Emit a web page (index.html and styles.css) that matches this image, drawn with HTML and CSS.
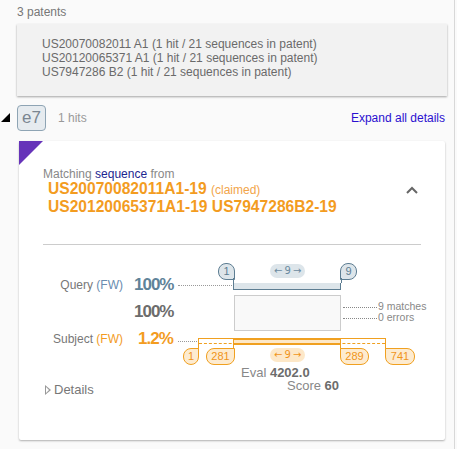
FILE: index.html
```html
<!DOCTYPE html>
<html lang="en">
<head>
    <meta charset="UTF-8">
    <meta name="viewport" content="width=device-width, initial-scale=1.0">
    <title>Patent hits</title>
    <link rel="stylesheet" href="styles.css">
</head>
<body>
    <div class="page">
        <div class="count">3 patents</div>

        <!-- Patent list -->
        <div class="patents">
            <div>US20070082011 A1 (1 hit / 21 sequences in patent)</div>
            <div>US20120065371 A1 (1 hit / 21 sequences in patent)</div>
            <div>US7947286 B2 (1 hit / 21 sequences in patent)</div>
        </div>

        <!-- Hit header -->
        <div class="hit-head">
            <span class="toggle"></span>
            <span class="badge">e7</span>
            <span class="hits">1 hits</span>
            <a class="expand" href="#">Expand all details</a>
        </div>

        <!-- Hit card -->
        <div class="card">
            <div class="corner"></div>
            <div class="card-top">
                <div>
                    <div class="from">Matching <span class="seq">sequence</span> from</div>
                    <div class="ids">US20070082011A1-19 <span class="claimed">(claimed)</span></div>
                    <div class="ids">US20120065371A1-19 US7947286B2-19</div>
                </div>
                <svg class="chevron" width="12" height="8" viewBox="0 0 12 8">
                    <path d="M1 7 L6 2 L11 7" fill="none" stroke="#666" stroke-width="2"/>
                </svg>
            </div>
            <div class="sep"></div>

            <!-- Alignment diagram -->
            <div class="align">
                <div class="row">
                    <div class="label">Query <span class="fw-q">(FW)</span></div>
                    <div class="pct pct-q">100%</div>
                    <div class="track">
                        <div class="dots"></div>
                        <div class="pin pin-q pin-left" style="left: 40px; width: 17px;">1</div>
                        <div class="pill pill-q">&larr; 9 &rarr;</div>
                        <div class="pin pin-q pin-right" style="left: 162px; width: 17px;">9</div>
                        <div class="bar bar-q"></div>
                    </div>
                </div>
                <div class="row">
                    <div class="label"></div>
                    <div class="pct pct-m">100%</div>
                    <div class="track">
                        <div class="mbox"></div>
                        <div class="stat">
                            <div><span class="sdots"></span>9 matches</div>
                            <div><span class="sdots"></span>0 errors</div>
                        </div>
                    </div>
                </div>
                <div class="row">
                    <div class="label">Subject <span class="fw-s">(FW)</span></div>
                    <div class="pct pct-s">1.2%</div>
                    <div class="track">
                        <div class="dots dots-s"></div>
                        <div class="ext"></div>
                        <div class="bar bar-s"></div>
                        <div class="pin pin-s pin-left" style="left: 5px; width: 16px;">1</div>
                        <div class="pin pin-s pin-left" style="left: 28px; width: 29px;">281</div>
                        <div class="pill pill-s">&larr; 9 &rarr;</div>
                        <div class="pin pin-s pin-right" style="left: 162px; width: 29px;">289</div>
                        <div class="pin pin-s pin-right" style="left: 207px; width: 30px;">741</div>
                    </div>
                </div>
                <div class="scores">
                    <div class="eval">Eval <b>4202.0</b></div>
                    <div class="score">Score <b>60</b></div>
                </div>
            </div>

            <div class="details"><span class="tri"></span>Details</div>
        </div>
    </div>
</body>
</html>
```

FILE: styles.css
```css
body {
    margin: 0;
    font-family: "Liberation Sans", Arial, sans-serif;
    background-color: #fafafa;
    color: #777;
}
.page {
    width: 455px;
    height: 449px;
    border-right: 1px solid #d8d8d8;
    box-sizing: border-box;
    padding: 5px 0 0 17px;
    background-color: #fafafa;
}
.count {
    font-size: 12px;
    line-height: 14px;
    color: #777;
}
.patents {
    margin-top: 5px;
    width: 430px;
    height: 72px;
    box-sizing: border-box;
    padding: 13px 0 0 25px;
    background-color: #f2f2f2;
    box-shadow: 0 1px 2px rgba(0, 0, 0, 0.35);
    font-size: 12px;
    line-height: 14px;
    color: #6a6a6a;
}
.hit-head {
    position: relative;
    display: flex;
    align-items: center;
    height: 26px;
    margin-top: 9px;
    width: 428px;
}
.toggle {
    position: absolute;
    left: -16px;
    top: 8px;
    width: 0;
    height: 0;
    border-left: 9px solid transparent;
    border-bottom: 9px solid #000;
}
.badge {
    width: 29px;
    height: 26px;
    box-sizing: border-box;
    border: 1px solid #8ea4b4;
    border-radius: 4px;
    background-color: #e6ebef;
    color: #7a8590;
    font-size: 17px;
    line-height: 24px;
    text-align: center;
}
.hits {
    margin-left: 12px;
    font-size: 12px;
    color: #999;
}
.expand {
    margin-left: auto;
    font-size: 12px;
    color: #2a10d0;
    text-decoration: none;
}
.card {
    position: relative;
    margin: 10px 0 0 2px;
    width: 426px;
    height: 299px;
    box-sizing: border-box;
    padding: 24px 24px 0 24px;
    background-color: #fff;
    border-radius: 2px;
    box-shadow: 0 1px 2px rgba(0, 0, 0, 0.3);
}
.corner {
    position: absolute;
    left: 0;
    top: 0;
    width: 0;
    height: 0;
    border-top: 24px solid #6633b9;
    border-right: 24px solid transparent;
}
.card-top {
    display: flex;
    align-items: center;
    justify-content: space-between;
    height: 52px;
}
.from {
    font-size: 12px;
    line-height: 14px;
    color: #888;
}
.seq {
    color: #1c2590;
}
.ids {
    margin-left: 5px;
    font-size: 15.6px;
    font-weight: bold;
    line-height: 16.5px;
    color: #f39c1f;
}
.claimed {
    font-size: 12px;
    font-weight: normal;
    color: #f2a54a;
}
.chevron {
    margin-right: 3px;
    margin-top: -2px;
}
.sep {
    margin-top: 27px;
    border-top: 1px solid #ccc;
}

/* alignment diagram */
.align {
    margin-top: 26px;
    margin-left: -24px;
}
.row {
    display: grid;
    grid-template-columns: 104px 55px 240px;
    align-items: center;
    height: 27px;
}
.label {
    text-align: right;
    font-size: 12px;
    color: #777;
}
.fw-q {
    color: #6a8caf;
}
.fw-s {
    color: #f39c1f;
}
.pct {
    padding-left: 11px;
    font-size: 17px;
    font-weight: bold;
    letter-spacing: -1px;
}
.pct-q {
    color: #5f8399;
}
.pct-m {
    color: #6c6c6c;
}
.pct-s {
    color: #f39c1f;
    padding-left: 15px;
}
.track {
    position: relative;
    height: 100%;
}
.dots {
    position: absolute;
    left: 0;
    top: 14px;
    width: 56px;
    border-top: 1px dotted #999;
}
.dots-s {
    top: 16px;
    width: 21px;
}
.pin {
    position: absolute;
    height: 17px;
    box-sizing: border-box;
    border-radius: 8px;
    font-size: 11px;
    line-height: 15px;
    text-align: center;
}
.pin-q {
    top: -8px;
    border: 1.5px solid #5d7d92;
    background-color: #dde5ea;
    color: #5d7d92;
}
.pin-s {
    top: 23px;
    border: 1.5px solid #f0a020;
    background-color: #fdebd0;
    color: #f0941a;
}
.pin-q.pin-left {
    border-bottom-right-radius: 0;
}
.pin-q.pin-right {
    border-bottom-left-radius: 0;
}
.pin-s.pin-left {
    border-top-right-radius: 0;
}
.pin-s.pin-right {
    border-top-left-radius: 0;
}
.pill {
    position: absolute;
    left: 92px;
    width: 35px;
    height: 14px;
    border-radius: 7px;
    font-family: "DejaVu Sans", sans-serif;
    font-size: 10px;
    line-height: 14px;
    letter-spacing: -0.5px;
    text-align: center;
    white-space: nowrap;
}
.pill-q {
    top: -7px;
    background-color: #dde5ea;
    color: #6b8aa0;
}
.pill-s {
    top: 23px;
    background-color: #fde8c8;
    color: #f0941a;
}
.bar {
    position: absolute;
    left: 55px;
    width: 108px;
    height: 7px;
    box-sizing: border-box;
}
.bar-q {
    top: 12px;
    border: 1.5px solid #5d7d92;
    border-top-width: 0;
    background-color: #dde5ea;
}
.bar-q::before,
.bar-q::after {
    content: "";
    position: absolute;
    top: -5px;
    height: 5px;
    border-left: 1.5px solid #5d7d92;
}
.bar-q::before {
    left: -1.5px;
}
.bar-q::after {
    right: -1.5px;
}
.bar-s {
    top: 13px;
    height: 11px;
    border-left: 1.5px solid #f0a020;
    border-right: 1.5px solid #f0a020;
    background: linear-gradient(#f0a020 0 1.5px, #fde8c8 1.5px 5px, #f0a020 5px 6.5px, transparent 6.5px);
}
.ext {
    position: absolute;
    left: 20px;
    top: 13px;
    width: 188px;
    height: 11px;
    box-sizing: border-box;
    border-top: 1.5px solid #f0a020;
    border-left: 1.5px solid #f0a020;
    border-right: 1.5px solid #f0a020;
}
.ext::after {
    content: "";
    position: absolute;
    left: 0;
    right: 0;
    top: 3.5px;
    border-top: 1.5px dashed #f0a020;
}
.mbox {
    position: absolute;
    left: 56px;
    top: -3px;
    width: 107px;
    height: 36px;
    box-sizing: border-box;
    border: 1px solid #ccc;
    background-color: #f9f9f9;
}
.stat {
    position: absolute;
    left: 165px;
    top: 3px;
    font-size: 10.5px;
    line-height: 11px;
    color: #888;
    white-space: nowrap;
}
.sdots {
    display: inline-block;
    width: 34px;
    margin-right: 1px;
    vertical-align: middle;
    border-top: 1px dotted #888;
}
.scores {
    margin-top: 14px;
    font-size: 13px;
    line-height: 13px;
    color: #888;
}
.scores b {
    color: #6c6c6c;
}
.eval {
    padding-left: 222px;
}
.score {
    padding-left: 268px;
}
.details {
    margin-top: -10px;
    display: flex;
    align-items: center;
    font-size: 13px;
    line-height: 15px;
    color: #777;
    padding-left: 2px;
}
.tri {
    width: 0;
    height: 0;
    margin-right: 3px;
    border-top: 5px solid transparent;
    border-bottom: 5px solid transparent;
    border-left: 6px solid #999;
    position: relative;
}
.tri::after {
    content: "";
    position: absolute;
    left: -5px;
    top: -3px;
    border-top: 3px solid transparent;
    border-bottom: 3px solid transparent;
    border-left: 3.5px solid #fff;
}
```
